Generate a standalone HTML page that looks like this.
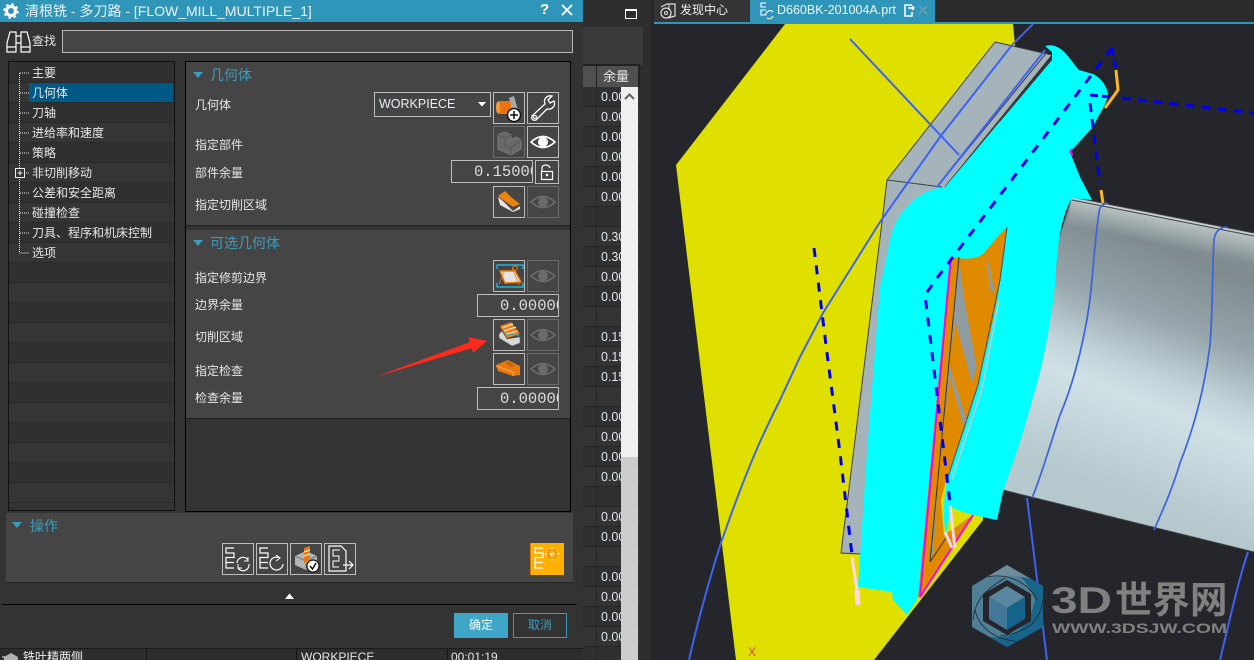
<!DOCTYPE html>
<html><head><meta charset="utf-8">
<style>
html,body{margin:0;padding:0;width:1254px;height:660px;overflow:hidden;background:#2f2f2f}
body{position:relative;font-family:"Liberation Sans","Noto Sans CJK SC",sans-serif;font-size:12px;color:#e6e6e6}
div,svg,span{position:absolute;box-sizing:border-box}
.t{white-space:nowrap;line-height:16px;height:16px}
.h{white-space:nowrap;font-size:14px;line-height:18px;height:18px;color:#3d9cbc}
.b{width:32px;height:32px;border:1px solid #bdbdbd}
.d{width:32px;height:32px;border:1px solid #6c6c6c}
.b svg,.d svg{left:-1px;top:-1px}
.n{border:1px solid #bdbdbd;height:23px;overflow:hidden;font-family:"Liberation Mono",monospace;font-size:15.5px;line-height:22px;color:#dcdcdc;white-space:pre}
.r{left:9px;width:165px;height:20px;border-bottom:1px solid #2a2a2a}
.c{left:583px;width:57px;height:20px;border-bottom:1px solid #262626;background:#303030}
.v{left:601px;width:22px;overflow:hidden;white-space:nowrap;line-height:16px;height:16px;font-size:12.5px;color:#dfe8ee}
</style></head>
<body>
<svg width="0" height="0" style="position:absolute">
<defs>
<symbol id="eye" viewBox="0 0 32 32"><path d="M4 16Q16 5 28 16Q16 27 4 16Z" fill="none" stroke="#fff" stroke-width="1.6"/><circle cx="16" cy="16" r="5" fill="#fff"/></symbol>
<symbol id="eyed" viewBox="0 0 32 32"><path d="M4 16Q16 5 28 16Q16 27 4 16Z" fill="none" stroke="#6b6b6b" stroke-width="1.6"/><circle cx="16" cy="16" r="5" fill="#6b6b6b"/></symbol>
<symbol id="tr" viewBox="0 0 32 32"><path d="M12 5H4V10H12V14.500H4V25H12M4 19.500H12" fill="none" stroke="#fff" stroke-width="1.200"/></symbol>
</defs>
</svg>

<!-- background strip -->
<div style="left:583px;top:0;width:71px;height:660px;background:#2e2e2e"></div>
<div style="left:583px;top:27px;width:60px;height:38px;background:#3b3b3b"></div>
<div style="left:583px;top:64px;width:57px;height:596px;background:#222"></div>
<div style="left:651px;top:0;width:3px;height:660px;background:#262626"></div>
<div style="left:625px;top:9px;width:12px;height:10px;border:1px solid #fff;border-top-width:2px"></div>

<!-- right table column -->
<div style="left:583px;top:66px;width:13px;height:21px;background:#505050"></div>
<div style="left:597px;top:66px;width:41px;height:21px;background:#505050"></div>
<div class="t" style="left:603px;top:69px;color:#e8e8e8;font-size:13px">余量</div>
<div class="c" style="top:87px"></div><div class="c" style="top:107px;background:#343434"></div><div class="c" style="top:127px"></div><div class="c" style="top:147px;background:#343434"></div><div class="c" style="top:167px"></div><div class="c" style="top:187px;background:#343434"></div><div class="c" style="top:207px"></div><div class="c" style="top:227px;background:#343434"></div><div class="c" style="top:247px"></div><div class="c" style="top:267px;background:#343434"></div><div class="c" style="top:287px"></div><div class="c" style="top:307px;background:#343434"></div><div class="c" style="top:327px"></div><div class="c" style="top:347px;background:#343434"></div><div class="c" style="top:367px"></div><div class="c" style="top:387px;background:#343434"></div><div class="c" style="top:407px"></div><div class="c" style="top:427px;background:#343434"></div><div class="c" style="top:447px"></div><div class="c" style="top:467px;background:#343434"></div><div class="c" style="top:487px"></div><div class="c" style="top:507px;background:#343434"></div><div class="c" style="top:527px"></div><div class="c" style="top:547px;background:#343434"></div><div class="c" style="top:567px"></div><div class="c" style="top:587px;background:#343434"></div><div class="c" style="top:607px"></div><div class="c" style="top:627px;background:#343434"></div><div class="c" style="top:647px"></div>
<div style="left:596px;top:87px;width:1px;height:573px;background:#262626"></div>
<div class="v" style="top:89px">0.00</div><div class="v" style="top:109px">0.00</div><div class="v" style="top:129px">0.00</div><div class="v" style="top:149px">0.00</div><div class="v" style="top:169px">0.00</div><div class="v" style="top:189px">0.00</div>
<div class="v" style="top:229px">0.30</div><div class="v" style="top:249px">0.30</div><div class="v" style="top:269px">0.00</div><div class="v" style="top:289px">0.00</div>
<div class="v" style="top:329px">0.15</div><div class="v" style="top:349px">0.15</div><div class="v" style="top:369px">0.15</div>
<div class="v" style="top:409px">0.00</div><div class="v" style="top:429px">0.00</div><div class="v" style="top:449px">0.00</div><div class="v" style="top:469px">0.00</div>
<div class="v" style="top:509px">0.00</div><div class="v" style="top:529px">0.00</div>
<div class="v" style="top:569px">0.00</div><div class="v" style="top:589px">0.00</div><div class="v" style="top:609px">0.00</div><div class="v" style="top:629px">0.00</div>
<div style="left:621px;top:87px;width:17px;height:370px;background:#f0f0f0"></div>
<div style="left:621px;top:457px;width:17px;height:203px;background:#cdcdcd"></div>
<svg style="left:621px;top:87px" width="17" height="20"><path d="M4 12L8.500 7.500L13 12" fill="none" stroke="#606060" stroke-width="2"/></svg>

<!-- tabs -->
<div style="left:654px;top:0;width:600px;height:22px;background:#2b2b2b"></div>
<div style="left:654px;top:0;width:96px;height:22px;background:#343434"></div>
<div style="left:750px;top:0;width:185px;height:22px;background:#3096b9"></div>
<div style="left:654px;top:22px;width:600px;height:2px;background:#3096b9"></div>
<svg style="left:659px;top:2px" width="18" height="18"><path d="M2 5L8 2H16V14L9 16" fill="none" stroke="#ddd" stroke-width="1.200"/><circle cx="7" cy="11" r="5" fill="#343434" stroke="#ddd" stroke-width="1.200"/><circle cx="7" cy="11" r="1.500" fill="none" stroke="#ddd"/><path d="M10 2V8" stroke="#ddd"/></svg>
<div class="t" style="left:680px;top:2px;font-size:12px;color:#eee">发现中心</div>
<svg style="left:755px;top:1px" width="20" height="20"><path d="M11 2H6V6H11M11 9H6V14H11" fill="none" stroke="#fff" stroke-width="1.100"/><path d="M11 14A4 4 0 0 1 18 11M18 15A4 4 0 0 1 12 17" fill="none" stroke="#fff" stroke-width="1.100"/></svg>
<div class="t" style="left:777px;top:2px;font-size:12.500px;color:#eef6f9">D660BK-201004A.prt</div>
<svg style="left:903px;top:3px" width="12" height="14"><path d="M9 2H2V13H9V9M5 5H11M9 3L11 5L9 7" fill="none" stroke="#fff" stroke-width="1.500"/></svg>
<svg style="left:918px;top:5px" width="10" height="10"><path d="M1 1L9 9M9 1L1 9" stroke="#6a9db0" stroke-width="1.600"/></svg>

<!-- 3D viewport -->
<div style="left:654px;top:24px;width:600px;height:636px;background:#24262b"></div>
<svg style="left:0;top:0" width="1254" height="660" viewBox="0 0 1254 660">
<defs>
<linearGradient id="cyl" gradientUnits="userSpaceOnUse" x1="1200" y1="180" x2="1085" y2="480">
<stop offset="0" stop-color="#8f9b9e"/><stop offset=".24" stop-color="#7f8b8f"/><stop offset=".45" stop-color="#96a6ac"/><stop offset=".62" stop-color="#c2d3d9"/><stop offset=".71" stop-color="#d0e1e6"/><stop offset="1" stop-color="#b5c8ce"/>
</linearGradient>
<linearGradient id="cyt" gradientUnits="userSpaceOnUse" x1="1163" y1="214" x2="1157" y2="244">
<stop offset="0" stop-color="#d8e0e0" stop-opacity=".7"/><stop offset="1" stop-color="#d8e0e0" stop-opacity="0"/>
</linearGradient>
<clipPath id="vp"><rect x="654" y="24" width="600" height="636"/></clipPath>
</defs>
<g clip-path="url(#vp)">
<polygon points="785,24 1013,24 1015,45 1000,120 983,520 874,660 736,660 676,165" fill="#e0e000"/>
<!-- cylinder -->
<path d="M1072,197L1254,233V552L1003,490L1040,300Z" fill="url(#cyl)"/>
<path d="M1072,197L1254,233V270L1065,235Z" fill="url(#cyt)"/>
<path d="M1072,197L1254,233M1072,200L1254,236M1003,490L1254,552" stroke="#444" stroke-width="1" fill="none"/>
<path d="M1072,198.500L1254,234.500" stroke="#c8d0d0" stroke-width="1" fill="none"/>
<!-- blue lines under -->
<path d="M1027,498L1047,660M1248,552C1240,575 1232,610 1220,660" stroke="#3f62f0" stroke-width="2" fill="none"/>
<!-- gray body -->
<polygon points="995,42 1052,55 945,187 930,300 880,555 841,553 882,222 887,180" fill="#a4b4ba" stroke="#3a3a3a" stroke-width="1"/>
<path d="M887,180L942,187M1047,52L937,187M1052,58L945,187" stroke="#3a4448" stroke-width="1" fill="none"/>
<path d="M850,39L959,155" stroke="#3f62f0" stroke-width="2" fill="none"/>
<path d="M1033,24L1012,45L940,137L880,222L823,313L800,357L780,400C765,430 750,460 722,540C712,570 698,620 689,660" stroke="#3f62f0" stroke-width="2" fill="none"/>
<path d="M1045,50L937,187" stroke="#3f62f0" stroke-width="2" fill="none"/>
<!-- cyan -->
<path d="M1045,46Q1052,44 1057,47C1065,50 1072,62 1079,70L1093,74Q1105,80 1108,94C1106,106 1100,112 1093,127L1070,152L1080,177L1092,200L1072,198C1062,215 1058,240 1056,270C1054,310 1042,370 1033,397C1022,440 1010,470 1003,492L997,520L973,515L963,512L950,507L947,537C943,525 942,505 948,477L977,387L940,480L918,598L907,615L893,600L892,592L858,587L867,453L880,287L890,240C895,215 915,190 945,187L1052,60L1052,52Z" fill="#00ffff"/>
<!-- orange area -->
<path d="M950,257C960,258 975,262 985,252C992,243 1000,234 1007,227C1003,270 995,320 977,387C968,420 958,450 947,477L941,500L944,535L973,515L918,598Z" fill="#e08a00"/>
<path d="M1007,227L1000,280L978,385L948,477" stroke="#4a4a4a" stroke-width="1" fill="none"/>
<path d="M997,300L980,388L950,478" stroke="#c0cccc" stroke-width="1.500" fill="none" transform="translate(2,1)"/>
<!-- gray streaks in orange -->
<path d="M958.700,257L963.300,293L976.700,367L972,383L955,320L954,337L948.300,353L948.300,362L966.700,420L963.300,425L950,377L940,453L933.300,553L929.300,562Z" fill="#8e9ba0"/>
<path d="M986.700,253L995,293L990,290L987,260Z" fill="#8e9ba0"/>
<path d="M959,257L930,562L948,535" stroke="#303030" stroke-width="1" fill="none"/>
<!-- magenta -->
<path d="M951,257L920,597L973,515" stroke="#ff00e6" stroke-width="2" fill="none"/>
<polygon points="1069,152 1072,148 1073,157" fill="#ff00e6"/>
<!-- cylinder blue lines -->
<path d="M1108,203Q1100,204 1099,212C1095,240 1094,260 1091,290C1087,330 1075,380 1060,415C1050,445 1040,480 1032,498" stroke="#3c64d8" stroke-width="1.700" fill="none"/>
<path d="M1227,227Q1216,227 1214,240C1212,270 1213,310 1210,345C1205,385 1195,425 1180,463C1172,490 1162,512 1154,530" stroke="#3c64d8" stroke-width="1.700" fill="none"/>
<!-- yellow tool segments -->
<path d="M1116,70L1118,90L1113,97L1105,108" stroke="#ffb71e" stroke-width="3" fill="none"/>
<path d="M1101,190L1103,203" stroke="#ffb71e" stroke-width="3" fill="none"/>
<!-- dashed tool path -->
<g stroke="#0000f0" stroke-width="3" fill="none">
<path d="M814,248L827,353L840,453L852,555" stroke-dasharray="9 8.500"/>
<path d="M1112,48L937,278L925,295L950,503" stroke-dasharray="9 8.500"/>
<path d="M1112,48L1116,70" stroke-dasharray="8 4"/>
<path d="M1122,98L1254,113" stroke-dasharray="9 7"/>
<path d="M1090,95L1112,97" stroke-dasharray="8 4"/>
<path d="M1090,103L1100,183" stroke-dasharray="9 7"/>
</g>
<!-- pink -->
<path d="M852,557L857,590" stroke="#fcd8e8" stroke-width="3" fill="none"/>
<path d="M857,590L858,605" stroke="#fcd8e8" stroke-width="5" fill="none"/>
<path d="M950,505L955,548M945,532L952,548" stroke="#fcd8e8" stroke-width="3" fill="none"/>
<text x="748" y="656" fill="#e03a3a" font-size="12" font-family="Liberation Sans">X</text>
<!-- watermark -->
<polygon points="1007,565 1043,586 1043,627 1007,647 972,627 972,586" fill="#507f98"/>
<path d="M1007,565L1043,586V627L1007,647L990,637C1015,640 1030,625 1035,600C1030,585 1020,575 1007,565Z" fill="#17658a"/>
<path d="M1007,565L1031,579C1015,574 995,576 985,578Z" fill="#6f8c9a"/>
<path d="M987,577C1010,572 1030,585 1037,600M1043,600C1040,620 1030,632 1000,636M1020,642C1000,640 980,632 975,610M973,620C975,600 985,590 1005,578" fill="none" stroke="#24262b" stroke-width=".8"/>
<polygon points="1007,580 1031,594 1031,621 1007,635 983,621 983,594" fill="#24262b"/>
<polygon points="1007,586 1025,597 1007,608 989,597" fill="#58879f"/>
<polygon points="989,597 1007,608 1007,630 989,619" fill="#42789a"/>
<polygon points="1025,597 1007,608 1007,630 1025,619" fill="#15628a"/>
<text x="1051" y="613" font-family="Liberation Sans" font-weight="700" font-size="37" fill="#808080" textLength="61" lengthAdjust="spacingAndGlyphs">3D</text>
<text x="1115" y="613" font-family="Liberation Sans,Noto Sans CJK SC,sans-serif" font-weight="700" font-size="37.500" fill="#808080">世界网</text>
<text x="1052" y="633" font-family="Liberation Sans" font-weight="700" font-size="13.500" fill="#808080" textLength="175" lengthAdjust="spacingAndGlyphs">WWW.3DSJW.COM</text>
</g>
</svg>

<!-- Dialog -->
<div style="left:0;top:0;width:583px;height:649px;background:#333;border-bottom:1px solid #1c1c1c"></div>
<div style="left:0;top:0;width:583px;height:22px;background:#3096b9"></div>
<svg style="left:3px;top:3px" width="16" height="16"><circle cx="8" cy="8" r="4.500" fill="none" stroke="#fff" stroke-width="3"/><circle cx="8" cy="8" r="6.500" fill="none" stroke="#fff" stroke-width="2.500" stroke-dasharray="2.500 2.600"/></svg>
<div class="t" style="left:25px;top:2px;font-size:14px;height:18px;line-height:18px;color:#e8f2f6">清根铣 - 多刀路 - [FLOW_MILL_MULTIPLE_1]</div>
<div class="t" style="left:540px;top:1px;font-size:15px;font-weight:700;color:#fff;height:18px;line-height:18px">?</div>
<svg style="left:561px;top:4px" width="12" height="12"><path d="M1 1L11 11M11 1L1 11" stroke="#fff" stroke-width="1.800"/></svg>

<svg style="left:5px;top:30px" width="26" height="24"><path d="M2 22V13L5 2H11V22ZM16 22V2H22L25 13V22ZM2 17H11M16 17H25M11 6H16M11 13H16" fill="none" stroke="#fff" stroke-width="1.200"/></svg>
<div class="t" style="left:32px;top:33px">查找</div>
<div style="left:62px;top:30px;width:511px;height:23px;background:#454545;border:1px solid #b8b8b8"></div>

<!-- Tree panel -->
<div style="left:8px;top:61px;width:167px;height:450px;border:1px solid #111;background:#333"></div>
<div class="r" style="top:63px;background:#303030"></div>
<div class="r" style="top:83px;background:#353535"></div>
<div style="left:29px;top:83px;width:144px;height:19px;background:#005a85"></div>
<div class="r" style="top:103px;background:#303030"></div><div class="r" style="top:123px;background:#353535"></div><div class="r" style="top:143px;background:#303030"></div><div class="r" style="top:163px;background:#353535"></div><div class="r" style="top:183px;background:#303030"></div><div class="r" style="top:203px;background:#353535"></div><div class="r" style="top:223px;background:#303030"></div><div class="r" style="top:243px;background:#353535"></div><div class="r" style="top:263px;background:#303030"></div><div class="r" style="top:283px;background:#353535"></div><div class="r" style="top:303px;background:#303030"></div><div class="r" style="top:323px;background:#353535"></div><div class="r" style="top:343px;background:#303030"></div><div class="r" style="top:363px;background:#353535"></div><div class="r" style="top:383px;background:#303030"></div><div class="r" style="top:403px;background:#353535"></div><div class="r" style="top:423px;background:#303030"></div><div class="r" style="top:443px;background:#353535"></div><div class="r" style="top:463px;background:#303030"></div><div class="r" style="top:483px;background:#353535"></div>
<svg style="left:0;top:0" width="40" height="270"><g stroke="#eee" stroke-width="1" stroke-dasharray="1 1" fill="none"><path d="M19.500 73V253H29M20 73H29M20 93H29M20 113H29M20 133H29M20 153H29M20 173H29M20 193H29M20 213H29M20 233H29"/></g><rect x="15.500" y="168.500" width="9" height="9" fill="#333" stroke="#eee"/><path d="M17.500 173H22.500M20 170.500V175.500" stroke="#eee"/></svg>
<div class="t" style="left:32px;top:65px">主要</div>
<div class="t" style="left:32px;top:85px">几何体</div>
<div class="t" style="left:32px;top:105px">刀轴</div>
<div class="t" style="left:32px;top:125px">进给率和速度</div>
<div class="t" style="left:32px;top:145px">策略</div>
<div class="t" style="left:32px;top:165px">非切削移动</div>
<div class="t" style="left:32px;top:185px">公差和安全距离</div>
<div class="t" style="left:32px;top:205px">碰撞检查</div>
<div class="t" style="left:32px;top:225px">刀具、程序和机床控制</div>
<div class="t" style="left:32px;top:245px">选项</div>

<!-- Main panel -->
<div style="left:185px;top:61px;width:386px;height:451px;border:1px solid #000;background:#333"></div>
<div style="left:186px;top:62px;width:384px;height:164px;background:#454545;border-bottom:1px solid #222"></div>
<div style="left:186px;top:230px;width:384px;height:189px;background:#454545;border-bottom:1px solid #222"></div>
<svg style="left:192px;top:71px" width="12" height="8"><path d="M1 1H11L6 7Z" fill="#3d9cbc"/></svg>
<div class="h" style="left:210px;top:66px">几何体</div>
<div class="t" style="left:195px;top:97px">几何体</div>
<div class="t" style="left:195px;top:137px">指定部件</div>
<div class="t" style="left:195px;top:165px">部件余量</div>
<div class="t" style="left:195px;top:197px">指定切削区域</div>

<div style="left:374px;top:92px;width:117px;height:25px;border:1px solid #bdbdbd"></div>
<div class="t" style="left:379px;top:96px;font-size:12.500px;color:#e6eef6">WORKPIECE</div>
<svg style="left:477px;top:101px" width="10" height="7"><path d="M1 1H9L5 5.500Z" fill="#fff"/></svg>

<div class="b" style="left:493px;top:92px"><svg width="32" height="32"><path d="M16 6L21 4L25 18L19 20Z" fill="#a8a8a8"/><rect x="4" y="9" width="14" height="13" rx="3" fill="#e8750f"/><ellipse cx="5" cy="15.500" rx="2" ry="6" fill="#f49a3c"/><circle cx="21" cy="23" r="6.500" fill="#fff" stroke="#111" stroke-width="1.500"/><path d="M17 23H25M21 19V27" stroke="#111" stroke-width="1.500"/></svg></div>
<div class="b" style="left:527px;top:92px"><svg width="32" height="32"><path d="M5 24L18 12C16 7 20 3 25 4L21 8L23 11L27 9C29 14 25 18 20 17L9 28C6 29 4 27 5 24Z" fill="none" stroke="#fff" stroke-width="1.300"/><circle cx="8" cy="25" r="1.500" fill="none" stroke="#fff"/></svg></div>
<div class="d" style="left:493px;top:126px"><svg width="32" height="32"><path d="M5 9L12 6L18 9V14L23 11L28 14V23L18 29L5 23Z" fill="#696969" stroke="#7a7a7a"/><path d="M5 9L12 12L18 9M12 12V19L18 22V29M18 22L28 14" fill="none" stroke="#585858"/></svg></div>
<div class="b" style="left:527px;top:126px"><svg width="32" height="32"><use href="#eye" width="32" height="32"/></svg></div>
<div class="n" style="left:451px;top:160px;width:82px;padding-left:22px">0.15000</div>
<div class="b" style="left:535px;top:160px;width:24px;height:24px"><svg width="24" height="24"><path d="M7 11V8Q7 5 11 5Q14 5 15 8" fill="none" stroke="#fff" stroke-width="1.200"/><rect x="6.500" y="11.500" width="11" height="8" fill="none" stroke="#fff" stroke-width="1.200"/><circle cx="12" cy="15" r="1.300" fill="#fff"/></svg></div>
<div class="b" style="left:493px;top:186px"><svg width="32" height="32"><path d="M5 11L10 15L20 25L27 20V23L20 26L7 19Z" fill="#e4e4e4"/><path d="M5 10L12 5L18 11L27 18L20 21L10 14Z" fill="#ee820f"/></svg></div>
<div class="d" style="left:527px;top:186px"><svg width="32" height="32"><use href="#eyed" width="32" height="32"/></svg></div>

<svg style="left:192px;top:239px" width="12" height="8"><path d="M1 1H11L6 7Z" fill="#3d9cbc"/></svg>
<div class="h" style="left:210px;top:234px">可选几何体</div>
<div class="t" style="left:195px;top:270px">指定修剪边界</div>
<div class="t" style="left:195px;top:297px">边界余量</div>
<div class="t" style="left:195px;top:329px">切削区域</div>
<div class="t" style="left:195px;top:363px">指定检查</div>
<div class="t" style="left:195px;top:390px">检查余量</div>

<div class="b" style="left:493px;top:260px"><svg width="32" height="32"><path d="M4 9V5H30V9M4 23V27H30V23" fill="none" stroke="#19c6f0" stroke-width="1.200"/><polygon points="7,11 22,11 28,22 12,23" fill="#e4e4e4" stroke="#ef7d12" stroke-width="1.400"/><circle cx="22" cy="8" r="2.300" fill="none" stroke="#ef7d12"/><path d="M19 8L26 25M6 24L12 10" stroke="#ef7d12" stroke-width=".8"/></svg></div>
<div class="d" style="left:527px;top:260px"><svg width="32" height="32"><use href="#eyed" width="32" height="32"/></svg></div>
<div class="n" style="left:477px;top:294px;width:82px;padding-left:22px">0.00000</div>
<div class="b" style="left:493px;top:319px"><svg width="32" height="32"><path d="M6 15L9 12L14 20L27 18V24L19 27L6 19Z" fill="#d8d8d8" stroke="#666" stroke-width=".6"/><path d="M7 7L18 3L27 15L14 19Z" fill="#ef7d12"/><path d="M9 9L20 5M11 12L23 8M13 15L25 12" stroke="#fff" stroke-width="1"/><path d="M13 16Q20 13 26 17" fill="none" stroke="#19c6f0" stroke-width="1"/></svg></div>
<div class="d" style="left:527px;top:319px"><svg width="32" height="32"><use href="#eyed" width="32" height="32"/></svg></div>
<div class="b" style="left:493px;top:353px"><svg width="32" height="32"><path d="M3 12L15 7L27 13L27 22L20 23L5 18Z" fill="#ea7a10"/><path d="M12 10L16 8L22 13L18 14Z" fill="#c56408"/><path d="M3 13L20 19V23" fill="none" stroke="#ffb060" stroke-width=".8"/></svg></div>
<div class="d" style="left:527px;top:353px"><svg width="32" height="32"><use href="#eyed" width="32" height="32"/></svg></div>
<div class="n" style="left:477px;top:387px;width:82px;padding-left:22px">0.00000</div>

<!-- red arrow -->
<svg style="left:0;top:0" width="600" height="400"><polygon points="375,377 470,342 468,337 487,341 473,353 472,348" fill="#ff2a1c"/></svg>

<!-- Operation group -->
<div style="left:6px;top:513px;width:567px;height:70px;background:#454545;border-bottom:1px solid #262626"></div>
<svg style="left:11px;top:521px" width="12" height="8"><path d="M1 1H11L6 7Z" fill="#3d9cbc"/></svg>
<div class="h" style="left:30px;top:517px">操作</div>
<div class="b" style="left:222px;top:543px"><svg width="32" height="32"><use href="#tr" width="32" height="32"/><path d="M15 20A6 6 0 0 1 26 17M27 21A6 6 0 0 1 16 25" fill="none" stroke="#fff" stroke-width="1.200"/><path d="M26 14V18H22M16 21V25H20" fill="none" stroke="#fff"/></svg></div>
<div class="b" style="left:256px;top:543px"><svg width="32" height="32"><use href="#tr" width="32" height="32"/><path d="M24 15A6.500 6.500 0 1 0 27 21" fill="none" stroke="#fff" stroke-width="1.200"/><path d="M20 12L24 15L20 18" fill="none" stroke="#fff"/></svg></div>
<div class="b" style="left:290px;top:543px"><svg width="32" height="32"><path d="M5 13L16 8L27 13V22L16 27L5 22Z" fill="#b5b5b5"/><path d="M5 13L16 18L27 13M16 18V27" fill="none" stroke="#777"/><path d="M14 5L20 3V18L14 20Z" fill="#ea7a10"/><path d="M14 9L20 7M14 13L20 11" stroke="#fff"/><circle cx="23" cy="23" r="6" fill="#fff" stroke="#111" stroke-width="1.200"/><path d="M20 23L22.500 26L26 20" fill="none" stroke="#111" stroke-width="1.500"/></svg></div>
<div class="b" style="left:324px;top:543px"><svg width="32" height="32"><path d="M5 3H17L22 8V28H5Z" fill="none" stroke="#fff" stroke-width="1.200"/><path d="M16 7H9V13H15V18H9V24H15" fill="none" stroke="#fff"/><path d="M19 22H29M25 18L29 22L25 26" fill="#454545" stroke="#fff" stroke-width="1.200"/></svg></div>
<div style="left:530px;top:543px;width:34px;height:32px;background:#ffb000;border-left:1px solid #e07a00"><svg style="left:0;top:0" width="33" height="32"><use href="#tr" width="32" height="32"/><path d="M14 11H29M21 4V18" stroke="#fff" stroke-width="1.100" stroke-dasharray="3 1"/><circle cx="21" cy="11" r="4" fill="none" stroke="#e8701a"/></svg></div>

<svg style="left:284px;top:593px" width="11" height="7"><path d="M5.500 .5L10 6H1Z" fill="#fff"/></svg>
<div style="left:2px;top:604px;width:575px;height:1px;background:#000"></div>
<div class="t" style="left:454px;top:613px;width:54px;height:25px;line-height:25px;background:#3fa6c8;color:#f0fbff;text-align:center">确定</div>
<div class="t" style="left:513px;top:613px;width:54px;height:25px;line-height:23px;border:1px solid #3a9ab8;color:#3d9cbc;text-align:center">取消</div>

<!-- bottom row -->
<div style="left:0;top:649px;width:583px;height:11px;background:#2d2d2d;overflow:hidden">
<div style="left:146px;top:0;width:1px;height:11px;background:#151515"></div>
<div style="left:296px;top:0;width:1px;height:11px;background:#151515"></div>
<div style="left:447px;top:0;width:1px;height:11px;background:#151515"></div>
<svg style="left:2px;top:1px" width="18" height="14"><path d="M2 7L9 3L16 7V14H2Z" fill="#b0b0b0"/><path d="M0 7H3" stroke="#eee"/></svg>
<div class="t" style="left:23px;top:0px;color:#eee">铣叶精两侧</div>
<div class="t" style="left:301px;top:0px;color:#e6e6e6">WORKPIECE</div>
<div class="t" style="left:451px;top:0px;color:#e6e6e6">00:01:19</div>
</div>
</body></html>
